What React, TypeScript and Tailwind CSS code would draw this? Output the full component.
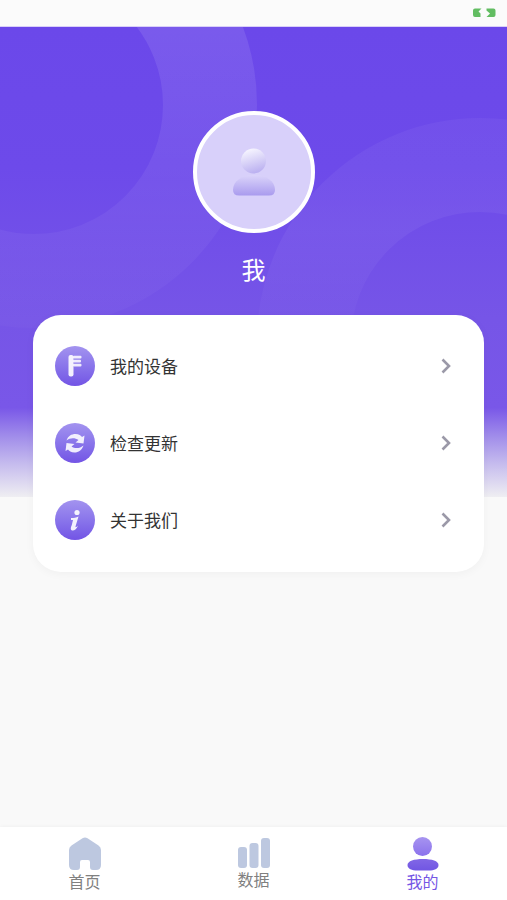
import { useState } from "react"
import type { ReactNode } from "react"

type MenuItem = {
  label: string
  icon: ReactNode
}

type Tab = {
  id: string
  label: string
  icon: ReactNode
}

const DeviceIcon = () => (
  <svg viewBox="0 0 40 40" className="h-10 w-10" fill="#fff" aria-hidden="true">
    <rect x="13.5" y="9" width="5" height="21.5" rx="2" fillOpacity="0.9" />
    <rect x="18" y="9.8" width="8.5" height="2.8" rx="1" fillOpacity="0.85" />
    <rect x="18" y="13.8" width="8" height="2.8" rx="1" fillOpacity="0.85" />
    <rect x="18" y="17.8" width="8.5" height="2.8" rx="1" fillOpacity="0.85" />
  </svg>
)

const UpdateIcon = () => (
  <svg viewBox="0 0 40 40" className="h-10 w-10" fill="#fff" fillOpacity="0.88" aria-hidden="true">
    <path d="M11.500 17.500C13 13 16.500 11 20.500 11C24 11 26 12.500 27 14L29.500 12.500L28.500 20.500L20.500 19.500L23.500 17C20 14.500 15 14.500 11.500 17.500Z" />
    <path d="M28.500 22.500C27 27 23.500 29.500 19.500 29.500C16 29.500 14 28 13 26.500L10.500 28L11.500 20L19.500 21L16.500 23.500C20 26 25 25.500 28.500 22.500Z" />
  </svg>
)

const InfoIcon = () => (
  <svg viewBox="0 0 40 40" className="h-10 w-10" fill="#fff" fillOpacity="0.9" aria-hidden="true">
    <circle cx="22" cy="12.5" r="2.6" />
    <path d="M16 18C19 18 21 17.500 23.500 16.500L20.500 26.500C20.500 28 21.500 27 23 25.500C22 29 19 31 17 30.500C15 29.500 16 27 16.800 25L18 20L16 20Z" />
  </svg>
)

const HomeIcon = () => (
  <svg viewBox="0 0 32 34" className="h-[34px] w-8" fill="#bdc8e0" aria-hidden="true">
    <path d="M13.500 1.200Q16 -0.400 18.500 1.200L29.500 8.500Q32 10 32 13V28Q32 33 27 33H24Q21 33 21 30V25Q21 23 19 23H13Q11 23 11 25V30Q11 33 8 33H5Q0 33 0 28V13Q0 10 2.500 8.500Z" />
  </svg>
)

const DataIcon = () => (
  <svg viewBox="0 0 32 32" className="h-8 w-8" fill="#bdc8e0" aria-hidden="true">
    <rect x="0" y="10" width="9" height="21" rx="3" />
    <rect x="11.5" y="6" width="9" height="25" rx="3" />
    <rect x="23" y="1" width="9" height="30" rx="3" />
  </svg>
)

const ProfileIcon = () => (
  <svg viewBox="0 0 32 34" className="h-[34px] w-8" aria-hidden="true">
    <defs>
      <linearGradient id="profile-head" x1="0" y1="0" x2="0" y2="1">
        <stop offset="0" stopColor="#a794f0" />
        <stop offset="1" stopColor="#8b72ec" />
      </linearGradient>
      <linearGradient id="profile-body" x1="0" y1="0" x2="0" y2="1">
        <stop offset="0" stopColor="#8167e6" />
        <stop offset="1" stopColor="#7156e3" />
      </linearGradient>
    </defs>
    <circle cx="15.5" cy="9.5" r="9.5" fill="url(#profile-head)" />
    <path d="M16 22C25 22 31.500 24 31.500 28C31.500 32 27 33.500 22 33.500H10C5 33.500 0.500 32 0.500 28C0.500 24 7 22 16 22Z" fill="url(#profile-body)" />
  </svg>
)

const BatteryIcon = () => (
  <svg viewBox="0 0 24 10" className="h-[10px] w-6" fill="#62bd62" aria-hidden="true">
    <path d="M3 0.500H9.500L6.500 3.500L8.500 5.500V9H3Q1 9 1 7V2.500Q1 0.500 3 0.500Z" />
    <path d="M14.500 0.500H21.500Q23.500 0.500 23.500 2.500V7Q23.500 9 21.500 9H14.500L18 5.500L14.500 2.500Z" />
  </svg>
)

const Chevron = () => (
  <svg viewBox="0 0 10 16" className="h-4 w-[10px]" fill="none" stroke="#9b99a8" strokeWidth="2.6" aria-hidden="true">
    <path d="M1.500 1.500L8 8L1.500 14.500" />
  </svg>
)

const Avatar = () => (
  <div className="flex h-[122px] w-[122px] items-center justify-center rounded-full border-4 border-white bg-[#d8d0fa]">
    <svg viewBox="0 0 42 48" className="h-12 w-[42px]" role="img" aria-label="头像">
      <defs>
        <linearGradient id="avatar-head" x1="0.3" y1="0" x2="0.6" y2="1">
          <stop offset="0" stopColor="#f8f7ff" />
          <stop offset="1" stopColor="#b9aef0" />
        </linearGradient>
        <linearGradient id="avatar-body" x1="0" y1="0" x2="0" y2="1">
          <stop offset="0" stopColor="#dbd4fa" />
          <stop offset="1" stopColor="#a99bee" />
        </linearGradient>
      </defs>
      <circle cx="20.5" cy="13" r="12.5" fill="url(#avatar-head)" />
      <path d="M21 27C33 27 42 33 42 42Q42 47.500 36 47.500H6Q0 47.500 0 42C0 33 9 27 21 27Z" fill="url(#avatar-body)" />
    </svg>
  </div>
)

const Backdrop = () => (
  <svg
    className="absolute inset-x-0 top-0 h-[470px] w-full"
    viewBox="0 0 507 470"
    preserveAspectRatio="xMidYMin slice"
    aria-hidden="true"
  >
    <defs>
      <linearGradient id="backdrop-fill" x1="0" y1="0" x2="0" y2="1">
        <stop offset="0" stopColor="#6b48ea" />
        <stop offset="0.3" stopColor="#6d4aea" />
        <stop offset="0.62" stopColor="#7655e7" />
        <stop offset="0.81" stopColor="#7957e8" />
        <stop offset="0.87" stopColor="#a08cea" />
        <stop offset="0.93" stopColor="#c6bcee" />
        <stop offset="1" stopColor="#efeef2" />
      </linearGradient>
      <linearGradient id="ring-left" x1="0" y1="0" x2="0" y2="300" gradientUnits="userSpaceOnUse">
        <stop offset="0" stopColor="#fff" stopOpacity="0.1" />
        <stop offset="0.6" stopColor="#fff" stopOpacity="0.05" />
        <stop offset="1" stopColor="#fff" stopOpacity="0.02" />
      </linearGradient>
      <linearGradient id="ring-right" x1="0" y1="90" x2="0" y2="320" gradientUnits="userSpaceOnUse">
        <stop offset="0" stopColor="#fff" stopOpacity="0.04" />
        <stop offset="0.5" stopColor="#fff" stopOpacity="0.05" />
        <stop offset="1" stopColor="#fff" stopOpacity="0.01" />
      </linearGradient>
    </defs>
    <rect width="507" height="470" fill="url(#backdrop-fill)" />
    <circle cx="34" cy="78" r="176" fill="none" stroke="url(#ring-left)" strokeWidth="94" />
    <circle cx="480" cy="314" r="176" fill="none" stroke="url(#ring-right)" strokeWidth="94" />
  </svg>
)

const menuItems: MenuItem[] = [
  { label: "我的设备", icon: <DeviceIcon /> },
  { label: "检查更新", icon: <UpdateIcon /> },
  { label: "关于我们", icon: <InfoIcon /> }
]

const tabs: Tab[] = [
  { id: "home", label: "首页", icon: <HomeIcon /> },
  { id: "data", label: "数据", icon: <DataIcon /> },
  { id: "mine", label: "我的", icon: <ProfileIcon /> }
]

export default function App() {
  const [activeTab, setActiveTab] = useState("mine")

  return (
    <div className="flex min-h-screen flex-col bg-[#f9f9f9] font-['Noto_Sans_CJK_SC',sans-serif]">
      <header className="flex h-[27px] items-center justify-end border-b border-[#d9d0f8] bg-[#fbfbfb] pr-[11px]">
        <BatteryIcon />
      </header>

      <main className="relative flex-1">
        <Backdrop />

        <div className="relative flex flex-col items-center pt-[84px]">
          <Avatar />
          <h1 className="mt-[18px] text-2xl leading-9 text-white">我</h1>
        </div>

        <ul className="relative mt-7 mr-[23px] ml-[33px] rounded-[28px] bg-white pt-3 pb-[14px] shadow-[0_2px_10px_rgba(0,0,0,0.04)]">
          {
            menuItems.map(({ label, icon }) => (
              <li key={ label }>
                <button type="button" className="flex h-[77px] w-full items-center pr-[33px] pl-[22px] text-left">
                  <span className="h-10 w-10 rounded-full bg-linear-to-b from-[#a393ef] to-[#7354e5]">{ icon }</span>
                  <span className="ml-[15px] flex-1 text-[17px] leading-6 text-[#333333]">{ label }</span>
                  <Chevron />
                </button>
              </li>
            ))
          }
        </ul>
      </main>

      <nav className="grid h-[73px] grid-cols-3 bg-white shadow-[0_-1px_3px_rgba(0,0,0,0.03)]">
        {
          tabs.map(({ id, label, icon }) => (
            <button
              key={ id }
              type="button"
              aria-current={ activeTab === id ? "page" : undefined }
              onClick={ () => setActiveTab(id) }
              className={ `flex flex-col items-center pt-[10px] text-base leading-5 ${activeTab === id ? "text-[#7557e5]" : "text-[#808080]"}` }
            >
              { icon }
              { label }
            </button>
          ))
        }
      </nav>
    </div>
  )
}
